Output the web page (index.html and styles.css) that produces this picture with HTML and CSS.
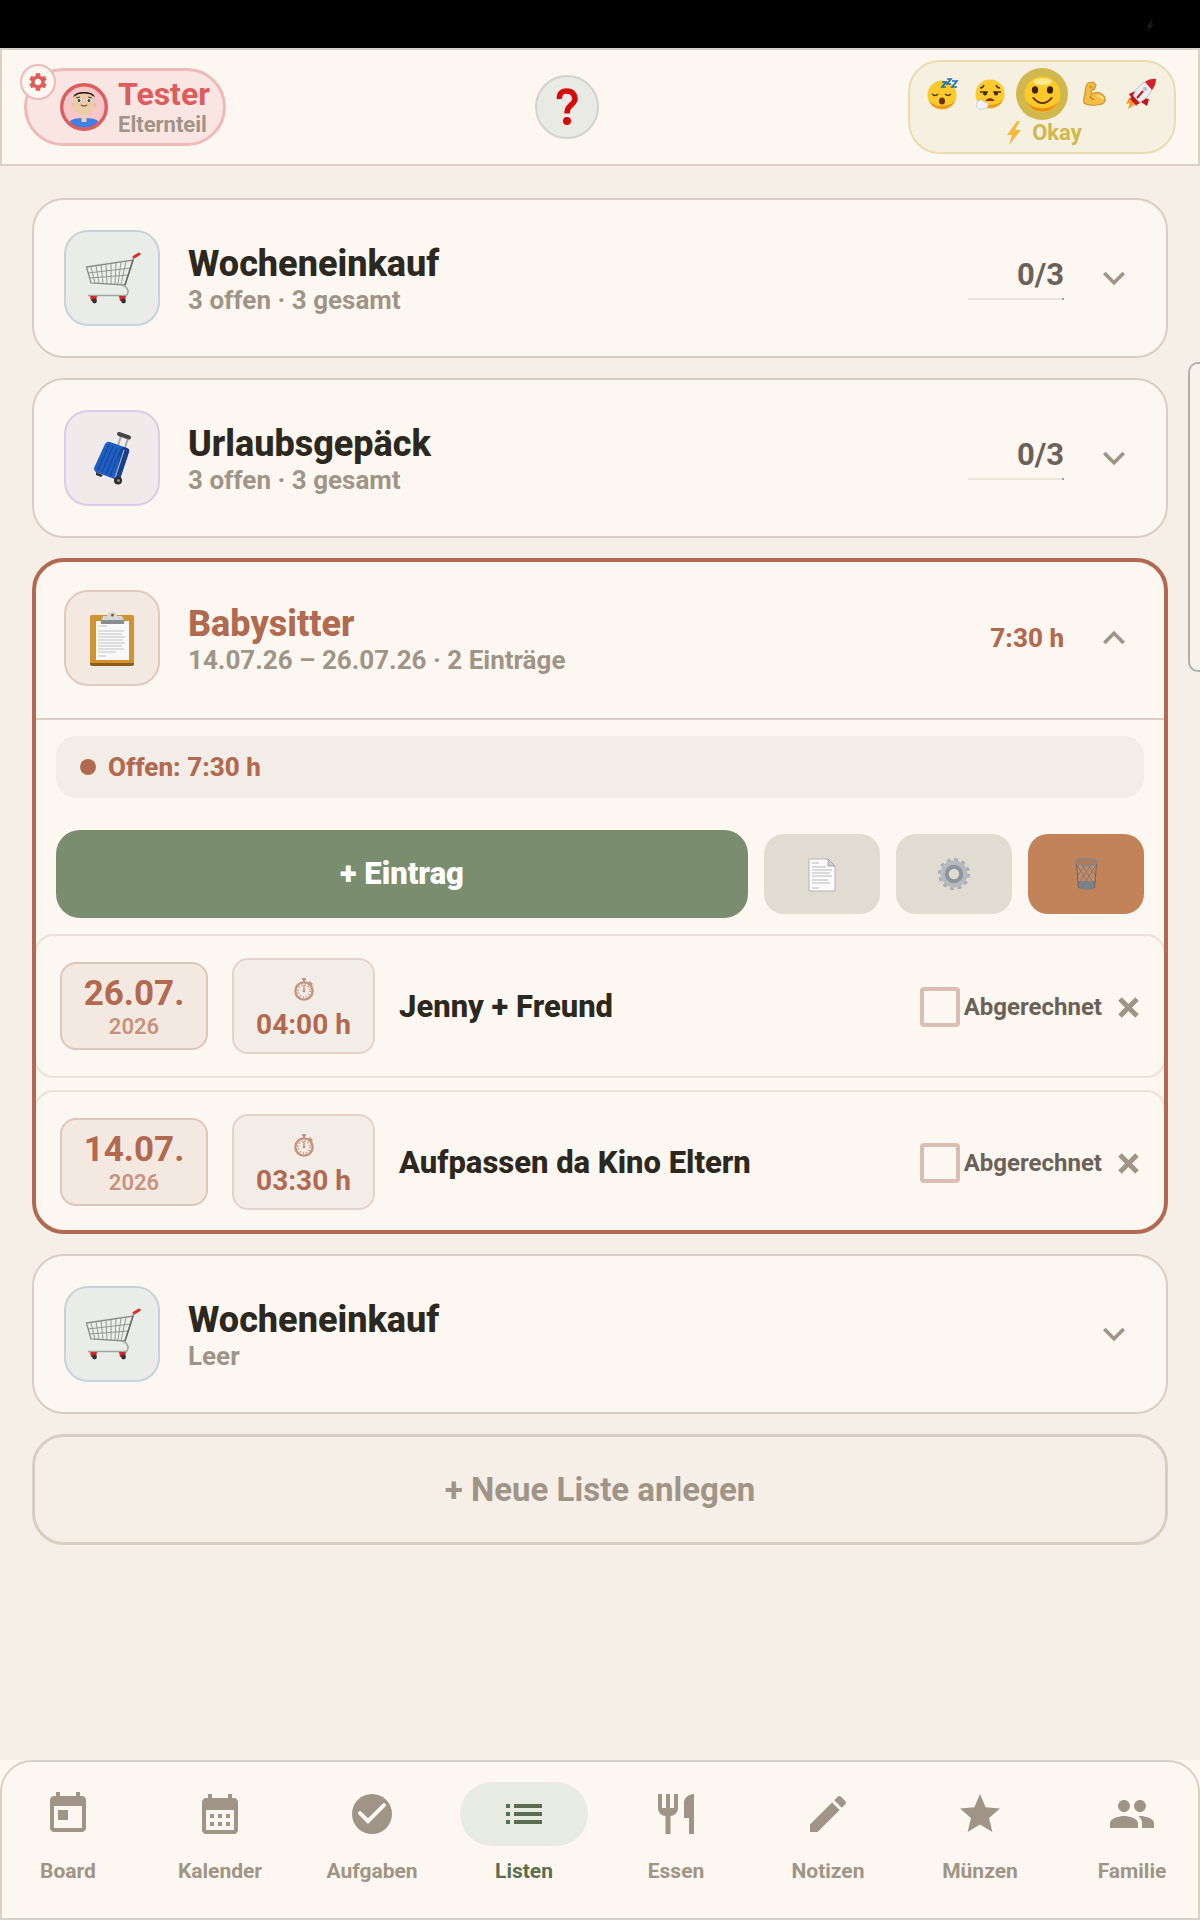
FILE: index.html
```html
<!DOCTYPE html>
<html lang="de">
<head>
	<meta charset="UTF-8">
	<meta name="viewport" content="width=device-width, initial-scale=1">
	<title>Listen</title>
	<link rel="stylesheet" href="styles.css">
</head>
<body>

<!-- shared icons -->
<svg class="defs" width="0" height="0" aria-hidden="true">
	<symbol id="down" viewBox="0 0 24 24"><path d="M16.59 8.59L12 13.17 7.41 8.59 6 10l6 6 6-6z"/></symbol>
	<symbol id="up" viewBox="0 0 24 24"><path d="M12 8l-6 6 1.41 1.41L12 10.83l4.59 4.58L18 14z"/></symbol>
	<symbol id="close" viewBox="0 0 32 32"><path d="M8 8l17 17M25 8L8 25" stroke="currentColor" stroke-width="5"/></symbol>
	<symbol id="bolt" viewBox="0 0 16 24"><path d="M11 0L1 14h5L3 24 15 9H9l5-9z"/></symbol>
	<symbol id="watch" viewBox="0 0 24 24">
		<circle cx="12" cy="14" r="8.6" fill="none" stroke="currentColor" stroke-width="2.400"/>
		<circle cx="12" cy="14" r="6" fill="none" stroke="currentColor" stroke-width="2" stroke-dasharray="1 2.14"/>
		<path d="M10 1h4v2h-1v3h-2V3h-1zM18 4l3 3-1.500 1.500-3-3zM11.300 8h1.400v6h-1.400z"/>
		<circle cx="12" cy="14" r="1.400"/>
	</symbol>
	<symbol id="cart" viewBox="0 0 60 60">
		<path d="M4.500 19L51 12l-8 25-34-2z" fill="#eceeeb" stroke="#8d8d8a" stroke-width="1.300"/>
		<path d="M6 25l43-5M7.500 30l39-3M9 19l4 16M14 18l3 17M19 17l2 18M24 16l1 20M29 15.500V36M34 15l-1 21M39 14l-3 22M44 13l-5 24" fill="none" stroke="#8d8d8a" stroke-width=".9"/>
		<path d="M51 12l-8 25" stroke="#6a6a68" stroke-width="1.500"/>
		<path d="M51 12l2-5" stroke="#999" stroke-width="1.500"/>
		<path d="M52 9l5-3" stroke="#d8322f" stroke-width="3" stroke-linecap="round"/>
		<path d="M39 37c8 1 9 10 4 10.500H6" fill="none" stroke="#a3a3a1" stroke-width="1.600"/>
		<path d="M8 48h7l-1 5H9zM37 48h7l-1 5h-5z" fill="#d3282a"/>
		<circle cx="12.500" cy="53" r="2.400" fill="#333"/><circle cx="41.500" cy="53" r="2.400" fill="#333"/>
	</symbol>
</svg>

<div class="page">
	<div class="status"><svg viewBox="0 0 16 24"><use href="#bolt"/></svg></div>

	<header class="top">
		<div class="profile">
			<svg class="avatar" viewBox="0 0 48 48">
				<circle cx="24" cy="24" r="22.500" fill="#f6c6c8"/>
				<clipPath id="face"><circle cx="24" cy="24" r="21"/></clipPath>
				<g clip-path="url(#face)">
					<path d="M10 48V38q3-3 14-3t14 3v10z" fill="#3f7fe6"/>
					<path d="M21.500 29h5v10h-5z" fill="#ecd2b4"/>
					<circle cx="13.500" cy="22" r="2" fill="#e6c39e"/><circle cx="34.500" cy="22" r="2" fill="#e6c39e"/>
					<path d="M14 14q1-5 10-5t10 5v8q0 9-10 10-10-1-10-10z" fill="#e9cda9"/>
					<path d="M13 14q2-5 11-5t11 5l-3-1.500q-2-2-8-2t-8 2z" fill="#1d1713"/>
					<path d="M16 15l4-1M28 14l4 1M21 22q3 2 6 0" fill="none" stroke="#5a4032" stroke-width="1.200"/>
					<ellipse cx="19" cy="17.500" rx="2.500" ry="1.800" fill="#fff"/><ellipse cx="29" cy="17.500" rx="2.500" ry="1.800" fill="#fff"/>
					<circle cx="19" cy="17.500" r="1.500" fill="#34473c"/><circle cx="29" cy="17.500" r="1.500" fill="#34473c"/>
				</g>
				<circle cx="24" cy="24" r="22.300" fill="none" stroke="#dd5c5c" stroke-width="3.400"/>
			</svg>
			<div>
				<div class="profile_name">Tester</div>
				<div class="profile_role">Elternteil</div>
			</div>
			<button class="profile_gear" aria-label="Einstellungen">
				<svg viewBox="0 0 24 24"><path d="M19.140 12.940c.04-.3.060-.61.060-.94 0-.32-.02-.64-.07-.94l2.030-1.580c.18-.14.230-.41.120-.61l-1.920-3.320c-.12-.22-.37-.29-.59-.22l-2.390.96c-.5-.38-1.030-.7-1.620-.94l-.36-2.540c-.04-.24-.24-.41-.48-.41h-3.840c-.24 0-.43.17-.47.41l-.36 2.540c-.59.24-1.130.57-1.620.94l-2.390-.96c-.22-.08-.47 0-.59.220L2.740 8.870c-.12.21-.08.470.120.610l2.030 1.580c-.05.3-.09.630-.09.94s.02.640.070.940l-2.030 1.580c-.18.14-.23.410-.12.610l1.920 3.320c.12.220.370.290.590.220l2.390-.96c.5.380 1.030.7 1.620.940l.36 2.540c.05.240.240.410.480.410h3.840c.24 0 .44-.17.470-.41l.36-2.540c.59-.24 1.130-.56 1.620-.94l2.390.96c.22.080.470 0 .59-.22l1.920-3.320c.12-.22.070-.47-.12-.61l-2.010-1.580zM12 15.600c-1.980 0-3.600-1.620-3.600-3.600s1.620-3.600 3.600-3.600 3.600 1.620 3.600 3.600-1.620 3.600-3.600 3.600z"/></svg>
			</button>
		</div>

		<button class="help" aria-label="Hilfe">
			<svg viewBox="0 0 24 40"><path d="M4.500 12Q4 4 11.500 4T20 11.500Q20 15 15.500 18.500 12 21.500 12 26.500" fill="none" stroke="#d50b0b" stroke-width="5.500"/><circle cx="12" cy="34" r="4" fill="#d50b0b"/></svg>
		</button>

		<div class="mood">
			<div class="mood_list">
				<button class="mood_item" aria-label="Müde">
					<svg viewBox="0 0 32 32"><circle cx="15" cy="17" r="14.500" fill="#fdca2d"/><path d="M2 23a14.500 14.500 0 0 0 26 0q-5 5-13 5T2 23" fill="#ec9719"/><path d="M5 16q3 3 6 0M18 16q3 3 6 0" fill="none" stroke="#563613" stroke-width="1.600"/><ellipse cx="15" cy="23" rx="3" ry="3.500" fill="#6b2f12"/><path d="M15 4h4l-4 5h4M20 1h4l-4 5h4M25 3h5l-5 6h5" fill="none" stroke="#1e6fae" stroke-width="1.700"/></svg>
				</button>
				<button class="mood_item" aria-label="Erschöpft">
					<svg viewBox="0 0 32 32"><circle cx="16" cy="16" r="14.500" fill="#fdca2d"/><path d="M3 22a14.500 14.500 0 0 0 26 0q-5 5-13 5T3 22" fill="#ec9719"/><path d="M6 10q3 0 4-3M22 7q1 3 4 3M6 14h8M19 14h8" fill="none" stroke="#563613" stroke-width="1.500"/><circle cx="11" cy="15.500" r="2" fill="#3b2410"/><circle cx="22" cy="15.500" r="2" fill="#3b2410"/><path d="M11 23q5-6 10 0z" fill="#8c2a16"/><path d="M3 24q4-4 7 0l4 1q1 6-5 6H5q-4-2-2-7z" fill="#f2f4f5" stroke="#c2c9cd" stroke-width=".8"/></svg>
				</button>
				<button class="mood_item mood_item--on" aria-label="Okay" aria-pressed="true">
					<svg viewBox="0 0 32 32"><circle cx="16" cy="16" r="15.500" fill="#fdc928"/><path d="M1.500 21a15.500 15.500 0 0 0 29 0Q26 28 16 28T1.500 21" fill="#eb8e15"/><ellipse cx="16" cy="5" rx="8" ry="3" fill="#ffe98a"/><ellipse cx="9.500" cy="12" rx="2.700" ry="3.200" fill="#3b2208"/><ellipse cx="22.500" cy="12" rx="2.700" ry="3.200" fill="#3b2208"/><path d="M8 19q8 9 16 0" fill="none" stroke="#5a3511" stroke-width="1.600" stroke-linecap="round"/></svg>
				</button>
				<button class="mood_item" aria-label="Stark">
					<svg viewBox="0 0 32 32"><path d="M10 5l5-1 3 3-2 5-2-1-1 6q4-4 9-2 6 3 5 8-2 4-9 4-8 1-12-2-1-3 1-9 0-7 3-11z" fill="#f3bd45" stroke="#cf9433" stroke-width="1.200" stroke-linejoin="round"/><path d="M12 18q1 3 4 4M11 9h4" fill="none" stroke="#bd831f" stroke-width="1.200"/><path d="M19 18q4-1 6 3" fill="none" stroke="#fbe08c" stroke-width="1.800"/></svg>
				</button>
				<button class="mood_item" aria-label="Voller Energie">
					<svg viewBox="0 0 32 32"><path d="M4 20l-3 6 4-1-2 6 6-4 3 1 2-4-6-5z" fill="#f59432"/><path d="M10 13l-6 3 4 6 3-3zM18 20l6 1-2 7-6-4z" fill="#c3151c"/><path d="M8 18Q12 6 23 3l5 6q-3 10-14 16z" fill="#eceef0" stroke="#aaaeb3" stroke-width=".7"/><path d="M20 4q5-4 11-3 0 6-4 11z" fill="#d81e26"/><path d="M8 18l7 7-4 2-6-6z" fill="#c3151c"/><path d="M12 20l6-7" stroke="#c3151c" stroke-width="2"/><circle cx="20" cy="11" r="2.200" fill="#b9c4cf"/></svg>
				</button>
			</div>
			<div class="mood_label"><svg viewBox="0 0 16 24"><use href="#bolt"/></svg>Okay</div>
		</div>
	</header>

	<main class="lists">
		<section class="card">
			<button class="card_head" aria-expanded="false">
				<span class="tile tile--blue"><svg viewBox="0 0 60 60"><use href="#cart"/></svg></span>
				<span class="card_text"><span class="card_title">Wocheneinkauf</span><span class="card_sub">3 offen · 3 gesamt</span></span>
				<span class="count">0/3<span class="bar"></span></span>
				<svg class="chevron" viewBox="0 0 24 24"><use href="#down"/></svg>
			</button>
		</section>

		<section class="card">
			<button class="card_head" aria-expanded="false">
				<span class="tile tile--violet">
					<svg viewBox="0 0 60 60">
						<path d="M39 8l-4 13M46 10l-4 13" stroke="#a9abb0" stroke-width="2"/>
						<path d="M37 6l10 3.500" stroke="#45464a" stroke-width="4" stroke-linecap="round"/>
						<path d="M28 14l17 6q3 1 2 4l-9 27q-1 2-3 1l-21-8q-2-1-2-4l11-24q2-3 5-2z" fill="#1f5fc4"/>
						<path d="M40 19l5 1q3 1 2 4l-9 27q-1 2-3 1l-2-1z" fill="#173f8b"/>
						<path d="M27 17L16 42M31 18L20 44M35 20L24 46M39 21L28 48" stroke="#154a9f" stroke-width="1.300"/>
						<path d="M42 22L33 50" stroke="#9fb0cc" stroke-width="1.200"/>
						<path d="M14 44l7 3-2 2-5-2z" fill="#333"/><circle cx="36" cy="52.500" r="4" fill="#2d2d30"/><circle cx="36.500" cy="52.500" r="1.500" fill="#8d8d92"/>
					</svg>
				</span>
				<span class="card_text"><span class="card_title">Urlaubsgepäck</span><span class="card_sub">3 offen · 3 gesamt</span></span>
				<span class="count">0/3<span class="bar"></span></span>
				<svg class="chevron" viewBox="0 0 24 24"><use href="#down"/></svg>
			</button>
		</section>

		<section class="card card--open">
			<button class="card_head" aria-expanded="true">
				<span class="tile tile--rust">
					<svg viewBox="0 0 60 60">
						<rect x="8" y="7" width="44" height="50" rx="2" fill="#cf9330"/>
						<path d="M8 55h44v1q0 2-2 2H10q-2 0-2-2z" fill="#8f5d17"/>
						<path d="M14 13h33v39H14z" fill="#f8f8f8"/>
						<path d="M16 18h9M16 23h26M16 26h24M16 29h27M16 32h25M16 35h27M16 38h24M16 41h26M16 44h18M16 48h8" stroke="#c3c3c5" stroke-width="1"/>
						<path d="M25 8q0-4 5-4t5 4h5l3 7H18l3-7z" fill="#d6d7d9"/><path d="M19 12h23v4H19z" fill="#8c8d91"/><circle cx="30.500" cy="7" r="1.500" fill="#8f5d17"/>
					</svg>
				</span>
				<span class="card_text"><span class="card_title">Babysitter</span><span class="card_sub">14.07.26 – 26.07.26 · 2 Einträge</span></span>
				<span class="hours">7:30 h</span>
				<svg class="chevron" viewBox="0 0 24 24"><use href="#up"/></svg>
			</button>

			<div class="card_body">
				<div class="summary"><span class="dot"></span>Offen: 7:30 h</div>
				<div class="actions">
					<button class="btn btn--add">+ Eintrag</button>
					<button class="btn" aria-label="Export">
						<svg viewBox="0 0 36 36"><path d="M5 3h19l7 7v25H5z" fill="#fafafa" stroke="#b5b4b2" stroke-width="1"/><path d="M24 3v7h7z" fill="#cfd0d2" stroke="#9b9c9e" stroke-width=".8"/><path d="M8 7h7M8 11h14M8 14h20M8 17h18M8 20h20M8 24h16M8 27h18M8 32h7" stroke="#b9b9bb" stroke-width="1"/></svg>
					</button>
					<button class="btn" aria-label="Liste bearbeiten">
						<svg viewBox="0 0 36 36"><circle cx="18" cy="18" r="14" fill="none" stroke="#a9b0b6" stroke-width="4" stroke-dasharray="3.660 3.660"/><circle cx="18" cy="18" r="9.500" fill="none" stroke="#b4babf" stroke-width="8"/><circle cx="18" cy="18" r="7.200" fill="none" stroke="#8d959c" stroke-width="4"/></svg>
					</button>
					<button class="btn btn--delete" aria-label="Liste löschen">
						<svg viewBox="0 0 36 36"><path d="M8 7h21l-2 25q-8 4-17 0z" fill="#bd8d70"/><path d="M9.500 25h18l-.5 7q-8 4-17 0z" fill="#78838a"/><path d="M9 9l15 24M14 9l12 19M20 9l7 10M28 9L13 33M23 9L11 27M17 9l-7 10" stroke="#8a6e5d" stroke-width=".8"/><path d="M8.500 8l2 24M28.500 8l-2 24" stroke="#6f6259" stroke-width="1"/><ellipse cx="18.500" cy="6" rx="11" ry="3.500" fill="#b07a58" stroke="#848a8c" stroke-width="1.500"/></svg>
					</button>
				</div>

				<div class="entries">
					<article class="entry">
						<div class="date"><span class="date_day">26.07.</span><span class="date_year">2026</span></div>
						<div class="time"><svg viewBox="0 0 24 24"><use href="#watch"/></svg><span>04:00 h</span></div>
						<div class="entry_title">Jenny + Freund</div>
						<div class="entry_end">
							<label class="check" for="done1"><input type="checkbox" id="done1">Abgerechnet</label>
							<button class="remove" aria-label="Eintrag löschen"><svg viewBox="0 0 32 32"><use href="#close"/></svg></button>
						</div>
					</article>
					<article class="entry">
						<div class="date"><span class="date_day">14.07.</span><span class="date_year">2026</span></div>
						<div class="time"><svg viewBox="0 0 24 24"><use href="#watch"/></svg><span>03:30 h</span></div>
						<div class="entry_title">Aufpassen da Kino Eltern</div>
						<div class="entry_end">
							<label class="check" for="done2"><input type="checkbox" id="done2">Abgerechnet</label>
							<button class="remove" aria-label="Eintrag löschen"><svg viewBox="0 0 32 32"><use href="#close"/></svg></button>
						</div>
					</article>
				</div>
			</div>
		</section>

		<section class="card">
			<button class="card_head" aria-expanded="false">
				<span class="tile tile--blue"><svg viewBox="0 0 60 60"><use href="#cart"/></svg></span>
				<span class="card_text"><span class="card_title">Wocheneinkauf</span><span class="card_sub">Leer</span></span>
				<svg class="chevron" viewBox="0 0 24 24"><use href="#down"/></svg>
			</button>
		</section>

		<button class="new_list">+ Neue Liste anlegen</button>
	</main>

	<div class="nav_wrap">
		<nav class="nav">
			<a href="#board"><span class="nav_icon"><svg viewBox="0 0 24 24"><path d="M19 3h-1V1h-2v2H8V1H6v2H5c-1.110 0-1.990.9-1.990 2L3 19c0 1.100.890 2 2 2h14c1.100 0 2-.9 2-2V5c0-1.100-.9-2-2-2zm0 16H5V8h14v11zM7 10h5v5H7z"/></svg></span>Board</a>
			<a href="#kalender"><span class="nav_icon"><svg viewBox="0 0 24 24"><path d="M19 4h-1V2h-2v2H8V2H6v2H5c-1.110 0-1.990.9-1.990 2L3 20c0 1.100.890 2 2 2h14c1.100 0 2-.9 2-2V6c0-1.100-.9-2-2-2zm0 16H5V10h14v10zM9 14H7v-2h2v2zm4 0h-2v-2h2v2zm4 0h-2v-2h2v2zm-8 4H7v-2h2v2zm4 0h-2v-2h2v2zm4 0h-2v-2h2v2z"/></svg></span>Kalender</a>
			<a href="#aufgaben"><span class="nav_icon"><svg viewBox="0 0 24 24"><circle cx="12" cy="12" r="10"/><path d="M6 11.600l4 4 8-8" fill="none" stroke="#fcf8f1" stroke-width="2" stroke-linecap="round"/></svg></span>Aufgaben</a>
			<a href="#listen" class="active" aria-current="page"><span class="nav_icon"><svg viewBox="0 0 24 24"><path d="M3 13h2v-2H3v2zm0 4h2v-2H3v2zm0-8h2V7H3v2zm4 4h14v-2H7v2zm0 4h14v-2H7v2zM7 7v2h14V7H7z"/></svg></span>Listen</a>
			<a href="#essen"><span class="nav_icon"><svg viewBox="0 0 24 24"><path d="M11 9H9V2H7v7H5V2H3v7c0 2.120 1.660 3.840 3.750 3.970V22h2.500v-9.030C11.340 12.840 13 11.120 13 9V2h-2v7zm5-3v8h2.500v8H21V2c-2.760 0-5 2.240-5 4z"/></svg></span>Essen</a>
			<a href="#notizen"><span class="nav_icon"><svg viewBox="0 0 24 24"><path d="M3 17.250V21h3.750L17.810 9.940l-3.750-3.750L3 17.250zM20.710 7.040c.39-.39.390-1.020 0-1.410l-2.340-2.340c-.39-.39-1.020-.39-1.410 0l-1.830 1.830 3.750 3.750 1.830-1.830z"/></svg></span>Notizen</a>
			<a href="#muenzen"><span class="nav_icon"><svg viewBox="0 0 24 24"><path d="M12 17.270L18.180 21l-1.640-7.030L22 9.240l-7.190-.61L12 2 9.190 8.630 2 9.240l5.460 4.730L5.820 21z"/></svg></span>Münzen</a>
			<a href="#familie"><span class="nav_icon"><svg viewBox="0 0 24 24"><path d="M16 11c1.660 0 2.990-1.340 2.990-3S17.660 5 16 5s-3 1.340-3 3 1.340 3 3 3zm-8 0c1.660 0 2.990-1.340 2.990-3S9.660 5 8 5 5 6.340 5 8s1.340 3 3 3zm0 2c-2.330 0-7 1.170-7 3.500V19h14v-2.500c0-2.330-4.670-3.500-7-3.500zm8 0c-.29 0-.62.020-.97.050 1.160.84 1.970 1.970 1.970 3.450V19h6v-2.500c0-2.330-4.670-3.500-7-3.500z"/></svg></span>Familie</a>
		</nav>
	</div>
</div>

<div class="edge_tab"></div>
</body>
</html>
```
FILE: styles.css
```css
* { box-sizing: border-box; }
body { margin: 0; background: #f6efe8; color: #2c2820; font-family: Roboto, "Liberation Sans", sans-serif; font-weight: 700; }
button { margin: 0; padding: 0; border: 0; background: none; color: inherit; font: inherit; cursor: pointer; }
svg { display: block; fill: currentColor; flex: none; }
.defs { position: absolute; }

.page { min-height: 100vh; display: flex; flex-direction: column; }
.status { height: 48px; background: #000; color: #1b1b1b; display: flex; align-items: center; justify-content: flex-end; padding: 4px 46px 0; }
.status svg { width: 8px; height: 14px; }

/* header */
.top { display: flex; align-items: center; justify-content: space-between; padding: 10px 22px; background: #fcf8f1; border: 2px solid #dcd0c6; }
.profile { position: relative; display: flex; align-items: center; gap: 10px; padding: 5px 13px 5px 33px; background: #f9e6e2; border: 3px solid #efb9b9; border-radius: 39px; }
.avatar { width: 48px; height: 48px; }
.profile_name { font-size: 32px; line-height: 36px; color: #dd5c5c; }
.profile_role { font-size: 22px; line-height: 26px; color: #9f9486; }
.profile_gear { position: absolute; left: -7px; top: -7px; width: 36px; height: 36px; display: flex; align-items: center; justify-content: center; background: #fcf8f1; border: 2px solid #efb9b9; border-radius: 50%; color: #dd5c5c; }
.profile_gear svg { width: 22px; height: 22px; }
.help { width: 64px; height: 64px; display: flex; align-items: center; justify-content: center; background: #eaeae5; border: 2px solid #d0d3ce; border-radius: 50%; }
.help svg { width: 24px; height: 40px; }
.mood { padding: 6px 12px; background: #f6f0e1; border: 2px solid #eadcaf; border-radius: 32px; }
.mood_list { display: flex; align-items: center; gap: 5px; }
.mood_item { width: 42px; height: 52px; display: flex; align-items: center; justify-content: center; }
.mood_item svg { width: 32px; height: 32px; }
.mood_item--on { width: 52px; background: #d1b84c; border-radius: 50%; }
.mood_item--on svg { width: 37px; height: 37px; }
.mood_label { display: flex; align-items: center; justify-content: center; gap: 10px; padding-left: 4px; font-size: 22px; line-height: 26px; color: #d1b84c; }
.mood_label svg { width: 16px; height: 24px; color: #f6b93d; }

/* lists */
.lists { flex: 1; display: flex; flex-direction: column; gap: 20px; padding: 32px; }
.card { background: #fcf8f1; border: 2px solid #d8cec5; border-radius: 32px; overflow: hidden; }
.card_head { width: 100%; display: flex; align-items: center; gap: 28px; padding: 30px; text-align: left; }
.tile { width: 96px; height: 96px; display: flex; align-items: center; justify-content: center; border: 2px solid; border-radius: 24px; }
.tile svg { width: 60px; height: 60px; }
.tile--blue { background: #eaece8; border-color: #c5d3dd; }
.tile--violet { background: #f1eaeb; border-color: #dacce6; }
.tile--rust { background: #f3e9e1; border-color: #e2c8bd; }
.card_text { flex: 1; min-width: 0; padding-top: 2px; }
.card_title, .card_sub { display: block; }
.card_title { font-size: 36px; line-height: 42px; font-weight: 800; }
.card_sub { font-size: 26px; line-height: 30px; color: #9f9486; }
.count { width: 96px; font-size: 31px; line-height: 38px; color: #6b6158; text-align: right; }
.bar { display: block; height: 2px; margin-top: 4px; background: linear-gradient(to left, #8da6c4 2px, #ebe6dc 2px); }
.chevron { width: 44px; height: 44px; color: #9f9486; }

.card--open { border: 4px solid #b16a50; }
.card--open .card_head { padding: 28px 28px 32px; }
.card--open .card_title, .hours { color: #b16a50; }
.hours { font-size: 26px; line-height: 30px; font-weight: 800; }
.card_body { border-top: 2px solid #dccdc4; }
.summary { display: flex; align-items: center; gap: 12px; margin: 16px 20px 32px; padding: 16px 24px; background: #f3ede7; border-radius: 20px; font-size: 26px; line-height: 30px; font-weight: 800; color: #b16a50; }
.dot { width: 16px; height: 16px; border-radius: 50%; background: #b16a50; }
.actions { display: flex; align-items: center; gap: 16px; margin: 0 20px 16px; }
.btn { width: 116px; height: 80px; display: flex; align-items: center; justify-content: center; background: #e0dcd2; border-radius: 20px; }
.btn svg { width: 36px; height: 36px; }
.btn--add { flex: 1; height: 88px; background: #7a8d6e; border-radius: 24px; color: #fff; font-size: 31px; line-height: 38px; font-weight: 900; }
.btn--delete { background: #c28359; }

/* rows run under the card border on both sides and at the bottom */
.entries { display: flex; flex-direction: column; gap: 12px; margin: 0 -2px -4px; }
.entry { min-height: 144px; display: flex; align-items: center; gap: 24px; padding: 22px 20px 22px 24px; border: 2px solid #eedfd7; border-radius: 20px; }
.date, .time { display: flex; flex-direction: column; align-items: center; justify-content: center; border: 2px solid #e6d2c8; border-radius: 16px; background: #f3ede7; color: #b16a50; }
.date { width: 148px; height: 88px; padding-top: 2px; background: #f3e9e1; border-color: #dfc6bb; }
.date_day { font-size: 35px; line-height: 40px; }
.date_year { font-size: 22px; line-height: 26px; font-weight: 600; color: #c6937c; }
.time { width: 143px; height: 96px; padding-top: 8px; font-size: 28px; line-height: 36px; }
.time svg { width: 24px; height: 24px; margin-bottom: 6px; color: #c6937c; }
.entry_title { flex: 1; padding-top: 2px; font-size: 31px; line-height: 38px; font-weight: 800; }
.entry_end { display: flex; align-items: center; gap: 10px; padding-top: 2px; }
.check { display: flex; align-items: center; gap: 4px; font-size: 24px; line-height: 28px; color: #6b6158; }
.check input { appearance: none; width: 40px; height: 40px; margin: 0; border: 4px solid #dbbdb2; border-radius: 4px; }
.check input:checked { background: #b16a50; }
.remove { width: 32px; height: 32px; color: #9f9486; }
.new_list { padding: 36px; border: 3px solid #d6cfc2; border-radius: 32px; color: #9f9486; font-size: 33px; line-height: 33px; }

/* bottom navigation */
.nav_wrap { background: #fdf9f1; }
.nav { display: flex; gap: 24px; padding: 20px 2px 34px; background: #fcf8f1; border: 2px solid #dcd0c6; border-radius: 32px 32px 0 0; }
.nav a { flex: 1; display: flex; flex-direction: column; align-items: center; gap: 12px; color: #9f9486; font-size: 21px; line-height: 26px; text-decoration: none; }
.nav_icon { align-self: stretch; height: 64px; display: flex; align-items: center; justify-content: center; border-radius: 32px; }
.nav_icon svg { width: 48px; height: 48px; }
.nav .active { color: #5b6e4f; }
.nav .active .nav_icon { background: #e8ebe3; }

.edge_tab { position: fixed; right: 0; top: 362px; width: 12px; height: 310px; background: #f7f3eb; border: 2px solid #b3b0aa; border-right: 0; border-radius: 10px 0 0 10px; }
```
